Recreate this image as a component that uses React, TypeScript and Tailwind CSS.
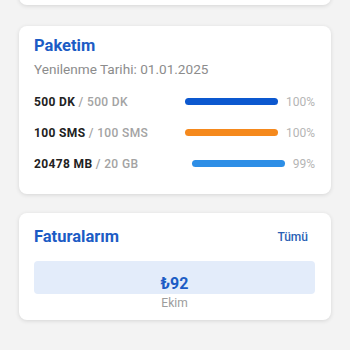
const USAGE = [
  { used: '500 DK', total: '500 DK', pct: 100, color: 'bg-[#0c58cf]' },
  { used: '100 SMS', total: '100 SMS', pct: 100, color: 'bg-[#f5891d]' },
  { used: '20478 MB', total: '20 GB', pct: 99, color: 'bg-[#2d8ee6]' },
];

export default function App() {
  return (
    <div className="w-[350px] h-[350px] overflow-hidden bg-[#f3f3f3] px-[19px] font-['Roboto',sans-serif]">
      {/* previous card, cut off at the top */}
      <div className="-mt-4 h-[21px] rounded-lg bg-white shadow-[0_1px_4px_rgba(0,0,0,0.12)]" />

      {/* ---- PAKETIM ---- */}
      <div className="mt-[21px] h-[168px] rounded-lg bg-white pl-[15px] pr-[16px] pt-[10px] shadow-[0_1px_4px_rgba(0,0,0,0.12)]">
        <h2 className="text-[16.5px] leading-[20px] font-bold text-[#1c5cc5]">Paketim</h2>
        <p className="mt-[3px] text-[13.6px] leading-[20px] text-[#8c8c8c]">Yenilenme Tarihi: 01.01.2025</p>
        <div className="mt-[7px]">
          {USAGE.map((row) => (
            <div key={row.used} className="flex h-[31px] items-center justify-between">
              <span className="text-[12px] leading-4 tracking-[0.03em]">
                <span className="font-bold text-[#222]">{row.used}</span>
                <span className="text-[#a3a3a3] font-medium"> / {row.total}</span>
              </span>
              <div className="flex items-center gap-2">
                <div className={`h-[7px] w-[93px] rounded-full ${row.color}`} />
                <span className="text-[12px] leading-4 text-[#b5b5b5]">{row.pct}%</span>
              </div>
            </div>
          ))}
        </div>
      </div>

      {/* ---- FATURALARIM ---- */}
      <div className="mt-[19px] h-[107px] rounded-lg bg-white pl-[15px] pr-[16px] pt-[14px] shadow-[0_1px_4px_rgba(0,0,0,0.12)]">
        <div className="flex items-center justify-between">
          <h2 className="text-[16.5px] leading-[20px] font-bold text-[#1c5cc5]">Faturalarım</h2>
          <span className="mr-[7px] text-[12px] leading-4 font-medium text-[#2a5fb5]">Tümü</span>
        </div>
        <div className="mt-[14px] h-[33px] rounded-[4px] bg-[#e3ecfa] pt-[11px] text-center">
          <span className="text-[16px] leading-[20px] font-bold text-[#1c5cc5]">₺92</span>
        </div>
        <p className="mt-[1px] text-center text-[12px] leading-4 text-[#9c9c9c]">Ekim</p>
      </div>
    </div>
  );
}
